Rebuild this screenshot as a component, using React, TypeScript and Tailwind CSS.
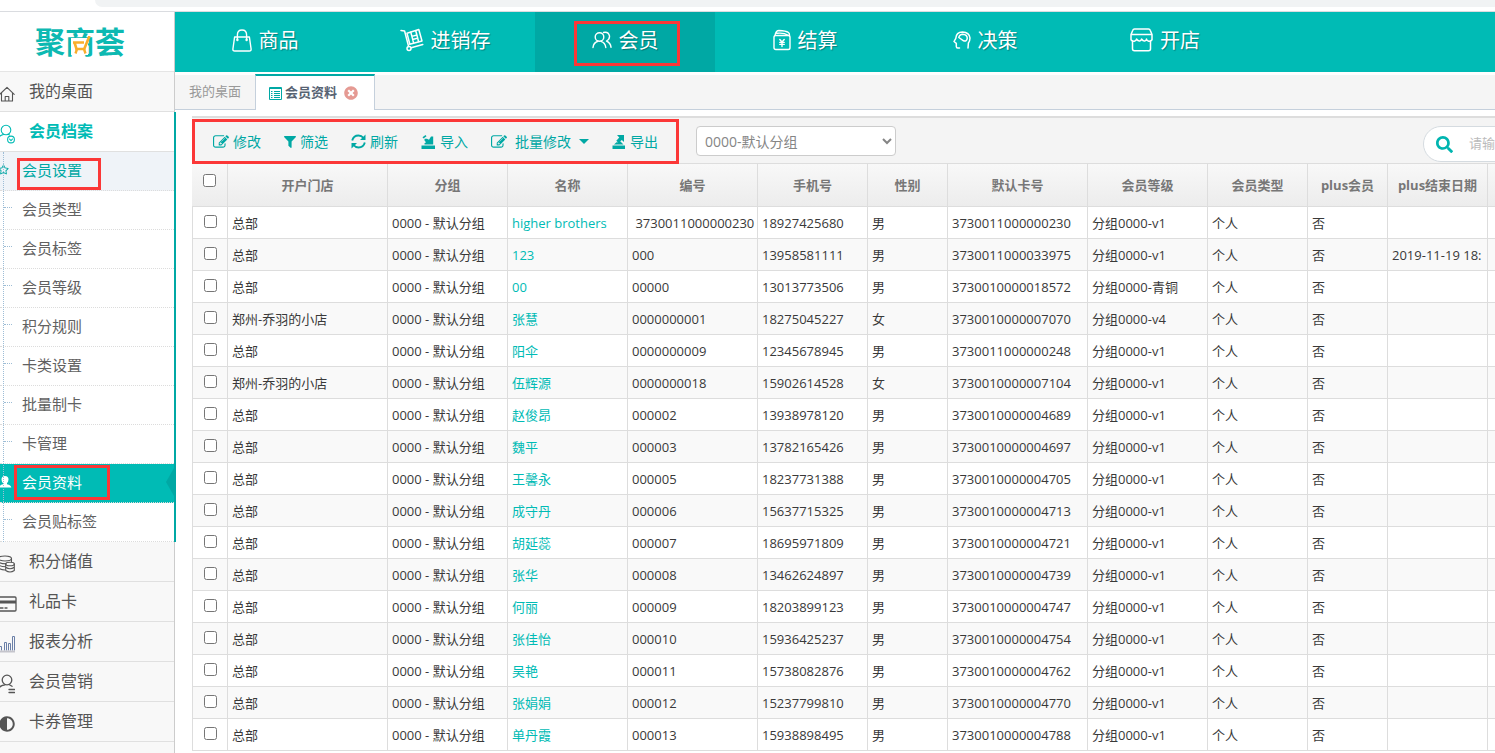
import React from 'react'
import { FaTimesCircle, FaSearch, FaAdjust, FaRegStar } from 'react-icons/fa'

type IconProps = { className?: string }

const line = { fill: 'none', stroke: 'currentColor', strokeLinecap: 'round', strokeLinejoin: 'round' } as const

/* top nav icons */
const BagIcon = () => (
  <svg viewBox="0 0 20 23" className="h-[23px] w-5" {...line} strokeWidth="1.4">
    <path d="M2.6 8h14.8l1.7 12q.2 2-1.8 2H2.7q-2 0-1.8-2z" />
    <path d="M5.4 10.5V6q0-5 4.6-5t4.6 5v4.5" />
    <path d="M5.4 10.8v.2M14.6 10.8v.2" strokeWidth="2.4" />
  </svg>
)

const TrolleyIcon = () => (
  <svg viewBox="0 0 24 24" className="h-6 w-6" {...line} strokeWidth="1.5">
    <path d="M1 2.500l3.600.5L8.600 18.500" />
    <circle cx="9" cy="20.500" r="2" />
    <path d="M11.200 19.800L22.800 16.500" />
    <path d="M7 5.200L18.800 1.500l3.200 11.500-12.200 3.300z" />
    <path d="M10.800 4.200l1.100 4.200 5-1.400L15.700 2.700M11.900 8.400l1.700 6.500M16.900 7l1.600 6.500M12.700 11.500l5-1.400" />
  </svg>
)

const MembersIcon = () => (
  <svg viewBox="0 0 20 18" className="h-[18px] w-5" {...line} strokeWidth="1.4">
    <circle cx="7.500" cy="6" r="4.300" />
    <path d="M1 16.500q.6-5 5-6.200M9 10.300q4.200 1.200 4.800 6.200" />
    <path d="M11.500 1.500q5-1 6 3.500.3 3.300-3 5 4 1.800 4.500 6.200" />
  </svg>
)

const BillIcon = () => (
  <svg viewBox="0 0 18 22" className="h-[22px] w-[18px]" {...line} strokeWidth="1.4">
    <path d="M2.800 6.500h12.400q1.800 0 1.800 1.800v10.400q0 1.800-1.800 1.800H2.800Q1 20.500 1 18.700V8.300q0-1.800 1.800-1.800z" />
    <path d="M2 6.300Q3 1.500 6 1.500q7 .3 9.500 2 1.200 1 1 3.300M4 4.300q7-.8 11 2" />
    <path d="M6.800 10.500L9 13l2.200-2.500M9 13v4.500M6.800 13.400h4.400M6.800 15.400h4.400" />
  </svg>
)

const HeadIcon = () => (
  <svg viewBox="0 0 18 18" className="h-[18px] w-[18px]" {...line} strokeWidth="1.5">
    <path d="M6.500 17H4.700q-1.400 0-1.400-1.500v-3.200L1 10.500l1.800-3.200Q3.200 1 9.500 1q6.800.2 7.500 6-.1 3-1.600 5l-.4 5" />
    <path d="M5.800 6.500Q6.500 3.200 9.800 3.200q4.300.3 4.500 4-.5 3.500-3.700 2.600Q8 8 5.800 6.500" />
  </svg>
)

const ShopIcon = () => (
  <svg viewBox="0 0 23 24" className="h-6 w-[23px]" {...line} strokeWidth="1.5">
    <path d="M4.500 1h14q1.300 0 1.700 1.200l1.800 4.300v5.300q-1.400 2-3.800 1.200-1.700-.3-1.700-2 0 1.700-1.700 2T11.500 11q0 1.700-1.700 2t-3.300-2q0 1.700-1.700 2-2.400.8-3.800-1.200V6.500l1.800-4.300Q3.200 1 4.500 1zM1 6.500h21" />
    <path d="M2.500 13.300v7.500q0 2 2 2h14q2 0 2-2v-7.500" />
  </svg>
)

/* sidebar icons */
const HomeIcon = () => (
  <svg viewBox="0 0 16 16" className="h-4 w-4 shrink-0" {...line} strokeWidth="1.100">
    <path d="M.8 8.300L8 1.300l7.200 7M2.500 7v8h11V7M6.200 15v-4.500h3.600V15" />
  </svg>
)

const MemberFileIcon = () => (
  <svg viewBox="0 0 20 20" className="h-5 w-5 shrink-0" {...line} strokeWidth="1.100">
    <circle cx="11" cy="6" r="4.800" />
    <path d="M1 18.500q.5-6 7.500-8M13 10.200l1.500.8" />
    <circle cx="16" cy="15.500" r="3.400" />
    <path d="M14.500 15l1.500 1.700 1.500-1.700" />
  </svg>
)

const CoinsIcon = () => (
  <svg viewBox="0 0 20 18" className="h-[18px] w-5 shrink-0" {...line} strokeWidth="1.100">
    <ellipse cx="10" cy="3.500" rx="6.500" ry="2.500" />
    <path d="M3.500 3.500v9q1 2.200 6.500 2.500M3.500 6.500Q5 8.800 11 8.800M3.500 9.500q1.500 2.200 7 2.300M16.500 3.500v3" />
    <ellipse cx="15" cy="9" rx="4.300" ry="1.800" />
    <path d="M10.700 9v6.500q4.300 3 8.600 0V9M10.700 12.200q4.300 3 8.600 0" />
  </svg>
)

const CardIcon = () => (
  <svg viewBox="0 0 22 16" className="-mr-0.5 h-4 w-[22px] shrink-0" {...line} strokeWidth="1.300">
    <rect x="1" y="1" width="20" height="14" rx="1" />
    <path d="M1 6h20" strokeWidth="3" strokeLinecap="butt" />
    <path d="M5 12h3M10 12h2" />
  </svg>
)

const ChartIcon = () => (
  <svg viewBox="0 0 20 18" className="h-[18px] w-5 shrink-0" fill="none" stroke="#6b80a8" strokeWidth="1">
    <path d="M4.500 15.500v-4h2v4M9.500 15.500v-8h2v8M13.500 15.500v-7h2v7M17.500 15.500v-14h2v14" />
    <path d="M0 16.500h20" stroke="#c5c5cc" strokeWidth="2" />
  </svg>
)

const MarketingIcon = () => (
  <svg viewBox="0 0 20 20" className="h-5 w-5 shrink-0" {...line} strokeWidth="1.300">
    <circle cx="12" cy="6" r="4.800" />
    <path d="M2.500 18.500Q3 11.500 10 10.800M14 10.500l3 1.800M14 15.500h5.500M14 18.500h5.500" />
  </svg>
)

const PersonIcon = ({ className }: IconProps) => (
  <svg viewBox="0 0 12 12" className={className} fill="currentColor">
    <path d="M5 0q3.500 0 3.500 3.500Q8.400 6 7 7v1.200q4 .8 4.300 3.300H-1Q-.5 9 3 8.200V7Q1.600 6 1.500 3.500 1.500 0 5 0z" />
  </svg>
)

/* toolbar icons */
const EditIcon = () => (
  <svg viewBox="0 0 1792 1792" className="h-4 w-4" fill="currentColor">
    <path d="M888 1184l116-116-152-152-116 116v56h96v96h56zm440-720q-16-16-33 1l-350 350q-17 17-1 33t33-1l350-350q17-17 1-33zm80 594v190q0 119-84.500 203.500t-203.500 84.500h-832q-119 0-203.500-84.500t-84.500-203.500v-832q0-119 84.500-203.500t203.500-84.500h832q63 0 117 25 15 7 18 23 3 17-9 29l-49 49q-14 14-32 8-23-6-45-6h-832q-66 0-113 47t-47 113v832q0 66 47 113t113 47h832q66 0 113-47t47-113v-126q0-13 9-22l64-64q15-15 35-7t20 29zm-96-738l288 288-672 672h-288v-288zm444 132l-92 92-288-288 92-92q28-28 68-28t68 28l152 152q28 28 28 68t-28 68z" />
  </svg>
)

const FilterIcon = () => (
  <svg viewBox="0 0 12 12" className="h-3 w-3" fill="currentColor">
    <path d="M.5 0h11q.8.4.2 1.200L7.600 5.500v6q-.4.8-1 .3L4.400 9.800V5.500L.3 1.200Q-.3.4.5 0z" />
  </svg>
)

const RefreshIcon = () => (
  <svg viewBox="0 0 15 15" className="h-[15px] w-[15px]" fill="none" stroke="currentColor" strokeWidth="1.900">
    <path d="M1.200 6.500Q2.500 1.500 7.500 1.500q3 0 5 2.500M13.800 8.500q-1.300 5-6.300 5-3 0-5-2.500" />
    <path d="M14.500.5V6H9zM.5 14.500V9H6z" fill="currentColor" stroke="none" />
  </svg>
)

const ImportIcon = () => (
  <svg viewBox="0 0 15 14" className="h-[14px] w-[15px]" fill="currentColor">
    <path d="M.5 10.500H14V14H.5zM3.500 9.500V8.300L5 7.200 3.500 5.500V3.800H6l2 1 2-3.300h2.200v8z" />
    <path d="M1.500 2.200L4.500 0l1 1.300-3 2.300z" />
  </svg>
)

const ExportIcon = () => (
  <svg viewBox="0 0 14 14" className="h-[14px] w-[14px]" fill="currentColor">
    <path d="M.5 10.500h12.500V14H.5zM2 9.500l2.500-2.300 2 .3 2-1 3 3zM5 0h7v7L9.800 5 6.500 8 4.300 5.800 7.300 2.500z" />
  </svg>
)

const TabListIcon = () => (
  <svg viewBox="0 0 13 13" className="h-[13px] w-[13px]" fill="none" stroke="currentColor">
    <path d="M.5.5h12v12H.5zM0 1.500h13" />
    <path d="M2 4.500h1.500M5 4.500h6M2 6.500h1.500M5 6.500h6M2 8.500h1.500M5 8.500h6M2 10.500h1.500M5 10.500h6" />
  </svg>
)

const Logo = () => (
  <a href="#home" className="relative text-[30px] leading-none font-bold text-[#0db9b2]">
    聚商荟
    <svg viewBox="0 0 20 20" className="absolute top-[9px] left-[36px] h-5 w-5">
      <rect x="0" y="2" width="17" height="17" fill="#fff" />
      <path d="M2 6.500h11M3.500 6.500l2 6.500h8M18.500 0L13 13.500" fill="none" stroke="#f9ae2b" strokeWidth="2.600" />
      <path d="M6 13l-1.500 4.500M13 13l1.500 4.500" fill="none" stroke="#f9ae2b" strokeWidth="2.400" />
    </svg>
  </a>
)

const navs = [
  { label: '商品', icon: <BagIcon /> },
  { label: '进销存', icon: <TrolleyIcon /> },
  { label: '会员', icon: <MembersIcon />, active: true },
  { label: '结算', icon: <BillIcon /> },
  { label: '决策', icon: <HeadIcon /> },
  { label: '开店', icon: <ShopIcon /> },
]

const subMenus = ['会员设置', '会员类型', '会员标签', '会员等级', '积分规则', '卡类设置', '批量制卡', '卡管理', '会员资料', '会员贴标签']

const bottomMenus = [
  { label: '积分储值', icon: <CoinsIcon /> },
  { label: '礼品卡', icon: <CardIcon /> },
  { label: '报表分析', icon: <ChartIcon /> },
  { label: '会员营销', icon: <MarketingIcon /> },
  { label: '卡券管理', icon: <FaAdjust size={16} className="shrink-0" /> },
]

const columns = ['开户门店', '分组', '名称', '编号', '手机号', '性别', '默认卡号', '会员等级', '会员类型', 'plus会员', 'plus结束日期', '']

// 门店, 名称, 编号, 手机号, 性别, 默认卡号, 会员等级, plus结束日期
const members = [
  ['总部', 'higher brothers', ' 3730011000000230', '18927425680', '男', '3730011000000230', '分组0000-v1', ''],
  ['总部', '123', '000', '13958581111', '男', '3730011000033975', '分组0000-v1', '2019-11-19 18:'],
  ['总部', '00', '00000', '13013773506', '男', '3730010000018572', '分组0000-青铜', ''],
  ['郑州-乔羽的小店', '张慧', '0000000001', '18275045227', '女', '3730010000007070', '分组0000-v4', ''],
  ['总部', '阳伞', '0000000009', '12345678945', '男', '3730011000000248', '分组0000-v1', ''],
  ['郑州-乔羽的小店', '伍辉源', '0000000018', '15902614528', '女', '3730010000007104', '分组0000-v1', ''],
  ['总部', '赵俊昂', '000002', '13938978120', '男', '3730010000004689', '分组0000-v1', ''],
  ['总部', '魏平', '000003', '13782165426', '男', '3730010000004697', '分组0000-v1', ''],
  ['总部', '王馨永', '000005', '18237731388', '男', '3730010000004705', '分组0000-v1', ''],
  ['总部', '成守丹', '000006', '15637715325', '男', '3730010000004713', '分组0000-v1', ''],
  ['总部', '胡延蕊', '000007', '18695971809', '男', '3730010000004721', '分组0000-v1', ''],
  ['总部', '张华', '000008', '13462624897', '男', '3730010000004739', '分组0000-v1', ''],
  ['总部', '何丽', '000009', '18203899123', '男', '3730010000004747', '分组0000-v1', ''],
  ['总部', '张佳怡', '000010', '15936425237', '男', '3730010000004754', '分组0000-v1', ''],
  ['总部', '吴艳', '000011', '15738082876', '男', '3730010000004762', '分组0000-v1', ''],
  ['总部', '张娟娟', '000012', '15237799810', '男', '3730010000004770', '分组0000-v1', ''],
  ['总部', '单丹霞', '000013', '15938898495', '男', '3730010000004788', '分组0000-v1', ''],
]

const MenuItem = ({ label, icon, active }: { label: string; icon: React.ReactNode; active?: boolean }) => (
  <a
    href="#menu"
    className={
      active
        ? 'flex h-10 items-center border-b border-[#e0e0e0] bg-white pb-0.5 text-base font-bold text-[#00bbb5]'
        : 'flex h-10 items-center border-b border-[#e0e0e0] pb-0.5 text-base text-[#555]'
    }
  >
    <span className="mr-3.5 flex w-[15px] justify-end pt-1.5">{icon}</span>
    {label}
  </a>
)

const SubItem = ({ label }: { label: string }) => {
  const hover = label === '会员设置'
  const active = label === '会员资料'
  let style = 'text-[#616161] bg-white'
  if (hover) style = 'text-[#00a8a4] bg-[#eff3f8]'
  if (active) style = 'text-white bg-[#00bbb5]'
  return (
    <li className="relative">
      <a href="#sub" className={`flex h-[39px] items-center border-b border-dotted border-[#dcdcdc] pb-0.5 pl-[22px] text-[15px] ${style}`}>
        {label}
      </a>
      {hover && <FaRegStar size={11} className="absolute top-3 -left-0.5 text-[#00a8a4]" />}
      {active && <PersonIcon className="absolute top-3 left-0 h-3 w-3 text-white" />}
      {!hover && !active && <span className="absolute top-4 left-1 w-2 border-t border-dotted border-[#9dbdd6]" />}
      {hover && <span className="absolute top-1.5 left-[17px] h-8 w-[84px] border-[3px] border-[#fb3737]" />}
      {active && <span className="absolute top-px left-3.5 h-[35px] w-24 border-[3px] border-[#fb3737]" />}
      {active && (
        <svg viewBox="0 0 8 28" className="absolute top-1 right-0 h-7 w-2 text-[#00a8a4]" fill="currentColor">
          <path d="M8 0v28L0 14z" />
        </svg>
      )}
    </li>
  )
}

const Sidebar = () => (
  <aside className="flex w-[175px] shrink-0 flex-col border-r border-[#ccc] bg-[#f8f8f8]">
    <div className="flex h-15 items-center justify-center border-b border-[#e5e5e5] bg-white pr-3.5">
      <Logo />
    </div>
    <nav>
      <MenuItem label="我的桌面" icon={<HomeIcon />} />
      <div className="relative">
        <MenuItem label="会员档案" icon={<MemberFileIcon />} active />
        <ul className="relative">
          {subMenus.map((s) => (
            <SubItem key={s} label={s} />
          ))}
          <span className="absolute inset-y-0 left-[3px] border-l border-dotted border-[#9dbdd6]" />
        </ul>
        <span className="absolute inset-y-0 -right-0.5 w-0.5 bg-[#00a8a4]" />
      </div>
      {bottomMenus.map((m) => (
        <MenuItem key={m.label} label={m.label} icon={m.icon} />
      ))}
    </nav>
  </aside>
)

const TopNav = () => (
  <nav className="flex h-15 shrink-0 bg-[#00bbb5]">
    {navs.map((n) => (
      <a
        key={n.label}
        href="#nav"
        className={
          n.active
            ? 'relative flex w-[180px] items-center justify-center gap-[7px] bg-[#00a8a4] pb-0.5 text-xl text-white [text-shadow:1px_1px_1px_rgba(0,0,0,0.3)]'
            : 'flex w-[180px] items-center justify-center gap-[7px] pb-0.5 text-xl text-white [text-shadow:1px_1px_1px_rgba(0,0,0,0.3)]'
        }
      >
        <span className="pb-0.5">{n.icon}</span>
        {n.label}
        {n.active && <span className="absolute top-[9px] left-[39px] h-[45px] w-[106px] border-[3px] border-[#fb3737]" />}
      </a>
    ))}
  </nav>
)

const Tabs = () => (
  <div className="mt-[3px] flex h-[35px] shrink-0 border-b border-[#c5d0dc] bg-[#f5f5f5] text-[13px]">
    <button className="w-20 text-[#999]">我的桌面</button>
    <div className="-mt-px -mb-px flex w-[120px] items-center gap-[3px] border-x border-t-2 border-x-[#c5d0dc] border-t-[#00a8a4] bg-white pl-[13px] font-bold text-[#576373]">
      <span className="text-[#00a8a4]"><TabListIcon /></span>
      会员资料
      <button aria-label="关闭" className="ml-1 text-[#e59a93]"><FaTimesCircle size={14} /></button>
    </div>
  </div>
)

const Toolbar = () => (
  <div className="flex h-12 items-start border-t-2 border-b border-[#ddd] bg-[#f4f4f4]">
    <div className="mt-px flex h-[45px] w-[487px] shrink-0 items-center gap-[23px] border-[3px] border-[#fb3737] pl-[18px] text-sm text-[#00a8a4]">
      <button className="flex items-center gap-1"><EditIcon />修改</button>
      <button className="flex items-center gap-1"><FilterIcon />筛选</button>
      <button className="flex items-center gap-1"><RefreshIcon />刷新</button>
      <button className="flex items-center gap-1"><ImportIcon />导入</button>
      <button className="flex items-center gap-2">
        <EditIcon />批量修改
        <svg viewBox="0 0 10 5" className="h-[5px] w-2.5" fill="currentColor"><path d="M0 0h10L5 5z" /></svg>
      </button>
      <button className="flex items-center gap-1"><ExportIcon />导出</button>
    </div>
    <select aria-label="分组" className="mt-2 ml-[17px] h-[30px] w-[200px] rounded border border-[#ccc] bg-white px-1 text-sm text-[#858585]">
      <option>0000-默认分组</option>
    </select>
    <div className="mt-2 ml-auto w-[72px] shrink-0 overflow-hidden">
      <label className="flex h-9 w-[260px] items-center rounded-full border border-[#d5dbe0] bg-white pl-3">
        <FaSearch size={17} className="shrink-0 text-[#00b5b0]" />
        <input aria-label="搜索" placeholder="请输入会员名称" className="ml-4 w-40 text-[13px] outline-none placeholder:text-[#bbb]" />
      </label>
    </div>
  </div>
)

const cell = 'h-8 overflow-hidden border-r border-b border-[#ddd] pl-1 whitespace-pre'

const MemberTable = () => (
  <div className="overflow-hidden">
    <table className="w-[1375px] table-fixed border-separate border-spacing-0 text-[13px] leading-5 text-[#393939]">
      <colgroup>
        <col className="w-9" />
        <col className="w-40" />
        <col className="w-[120px]" />
        <col className="w-[120px]" />
        <col className="w-[130px]" />
        <col className="w-[110px]" />
        <col className="w-20" />
        <col className="w-[140px]" />
        <col className="w-[120px]" />
        <col className="w-[100px]" />
        <col className="w-20" />
        <col className="w-[100px]" />
        <col />
      </colgroup>
      <thead className="text-[#777]">
        <tr className="bg-linear-to-b from-[#f8f8f8] to-[#ececec]">
          <th className="h-[43px] border-r border-b border-[#ddd] pt-2.5 align-top leading-none">
            <input type="checkbox" aria-label="全选" className="h-[13px] w-[13px]" />
          </th>
          {columns.map((c) => (
            <th key={c} className="border-r border-b border-[#ddd] font-bold whitespace-nowrap">{c}</th>
          ))}
        </tr>
      </thead>
      <tbody>
        {members.map(([shop, name, no, phone, sex, card, level, end]) => (
          <tr key={phone} className="even:bg-[#f9f9f9]">
            <td className="h-8 border-x border-b border-[#ddd] pb-1 text-center leading-none">
              <input type="checkbox" aria-label={name} className="h-[13px] w-[13px] align-middle" />
            </td>
            <td className={cell}>{shop}</td>
            <td className={cell}>0000 - 默认分组</td>
            <td className={cell}><a href="#member" className="text-[#00bbb5]">{name}</a></td>
            <td className={cell}>{no}</td>
            <td className={cell}>{phone}</td>
            <td className={cell}>{sex}</td>
            <td className={cell}>{card}</td>
            <td className={cell}>{level}</td>
            <td className={cell}>个人</td>
            <td className={cell}>否</td>
            <td className={cell}>{end}</td>
            <td className={cell}></td>
          </tr>
        ))}
      </tbody>
    </table>
  </div>
)

const App = () => {
  return (
    <div className="flex h-screen flex-col overflow-hidden bg-white font-['Open_Sans','Noto_Sans_CJK_SC',sans-serif]">
      <div className="h-3 shrink-0 border-b border-[#dadce0] pl-[95px]">
        <div className="h-[7px] rounded-bl-full bg-[#f1f3f4]" />
      </div>
      <div className="flex min-h-0 grow">
        <Sidebar />
        <div className="flex min-w-0 grow flex-col">
          <TopNav />
          <Tabs />
          <main className="mt-1.5 min-h-0 grow overflow-hidden pl-[17px]">
            <Toolbar />
            <MemberTable />
          </main>
        </div>
      </div>
    </div>
  )
}

export default App
